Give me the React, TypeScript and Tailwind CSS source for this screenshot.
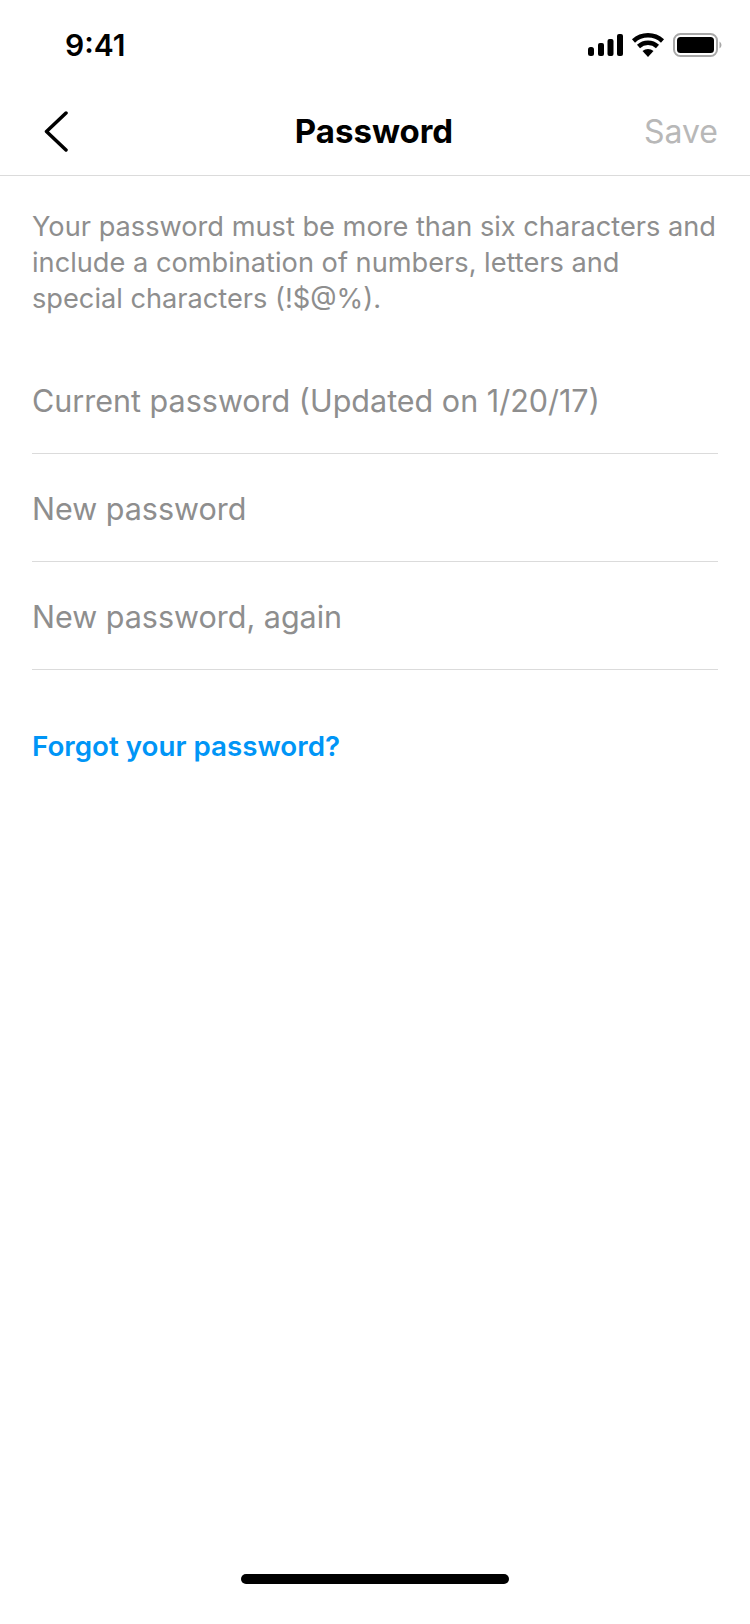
const FONT = "font-['Inter','Liberation_Sans',sans-serif]"

function StatusIcons() {
  return (
    <svg width="134" height="26" viewBox="0 0 134 26" className="block">
      <rect x="0" y="15" width="6" height="9" rx="2.500" fill="#000" />
      <rect x="10" y="11" width="6" height="13" rx="2" fill="#000" />
      <rect x="19.500" y="7" width="6" height="17" rx="2" fill="#000" />
      <rect x="29" y="2" width="6" height="22" rx="2" fill="#000" />
      <path d="M45.500 9a21.500 21.500 0 0 1 29 0" fill="none" stroke="#000" strokeWidth="4.500" />
      <path d="M50.500 14.500a14 14 0 0 1 19 0" fill="none" stroke="#000" strokeWidth="4.500" />
      <path d="M54.500 19a8.500 8.500 0 0 1 11 0L60 25z" fill="#000" />
      <rect x="86" y="2" width="43" height="22" rx="6.500" fill="none" stroke="#a8a8a8" strokeWidth="2" />
      <rect x="89" y="5" width="37" height="16" rx="3.500" fill="#000" />
      <path d="M131.500 9.500v7a4 4 0 0 0 2-3.500 4 4 0 0 0-2-3.500z" fill="#a8a8a8" />
    </svg>
  )
}

function Field({ label }: { label: string }) {
  return (
    <div className="flex h-[108px] items-center border-b border-[#dbdbdb] pt-[2px] text-[30.500px] text-[#8e8e8e]">
      {label}
    </div>
  )
}

export default function App() {
  return (
    <div className={`${FONT} flex h-[1624px] w-[750px] flex-col bg-white`}>
      <div className="flex h-[88px] shrink-0 items-center justify-between pl-[65px] pr-[28px] pt-[2px]">
        <span className="text-[30px] font-semibold text-black">9:41</span>
        <StatusIcons />
      </div>

      <div className="grid h-[88px] shrink-0 grid-cols-3 items-center border-b border-[#dbdbdb] pl-[44px] pr-[32px]">
        <svg width="24" height="42" viewBox="0 0 24 42" fill="none" stroke="#000" strokeWidth="3.500" strokeLinecap="round" strokeLinejoin="round">
          <path d="M22 2 2.500 20.500 22 39" />
        </svg>
        <span className="pr-[14px] text-center text-[33px] font-bold text-black">Password</span>
        <span className="text-right text-[32px] text-[#b8b8b8]">Save</span>
      </div>

      <div className="flex-1 pl-[32px] pr-[32px] pt-[33px]">
        <p className="text-[27.200px] leading-[36px] text-[#8e8e8e]">
          Your password must be more than six characters and
          <br />
          include a combination of numbers, letters and
          <br />
          special characters (!$@%).
        </p>

        <div className="mt-[29px]">
          <Field label="Current password (Updated on 1/20/17)" />
          <Field label="New password" />
          <Field label="New password, again" />
        </div>

        <a className="mt-[56px] block text-[27.750px] font-semibold text-[#0095f6]">Forgot your password?</a>
      </div>

      <div className="flex h-[50px] shrink-0 justify-center">
        <div className="h-[10px] w-[268px] rounded-full bg-black" />
      </div>
    </div>
  )
}
